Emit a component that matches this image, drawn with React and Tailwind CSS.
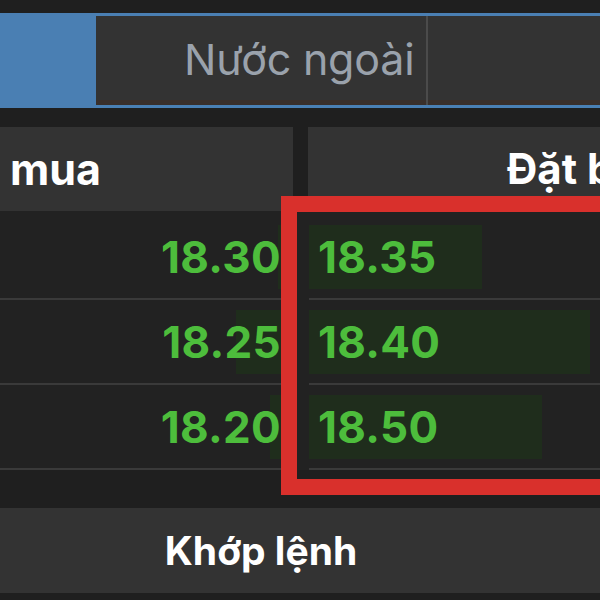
import React from "react";

const leftRows = [
  { price: "18.30", bar: 14, pt: "pt-[14px]" },
  { price: "18.25", bar: 56, pt: "pt-[10px]" },
  { price: "18.20", bar: 22, pt: "pt-[10px]" },
];
const rightRows = [
  { price: "18.35", bar: 173, pt: "pt-[14px]" },
  { price: "18.40", bar: 281, pt: "pt-[10px]" },
  { price: "18.50", bar: 233, pt: "pt-[10px]" },
];

export default function App() {
  return (
    <div
      className="relative w-[600px] h-[600px] overflow-hidden bg-[#1f1f1f]"
      style={{ fontFamily: "Inter, 'Noto Sans', 'Liberation Sans', sans-serif" }}
    >
      <div className="h-[13px]" />
      {/* Tabs */}
      <div className="flex h-[95px] border-y-[3px] border-[#4a7fb3] bg-[#4a7fb3]">
        <div className="w-[96px] shrink-0 bg-[#4a7fb3]" />
        <div className="w-[330px] shrink-0 flex items-center justify-start pl-[88px] bg-[#333333] border-b-[5px] border-[#392f2b] pt-[2px]">
          <span className="text-[43px] leading-none text-[#9aa2ac] tracking-[-0.2px] whitespace-nowrap">Nước ngoài</span>
        </div>
        <div className="w-[2px] shrink-0 bg-[#4b4b4b]" />
        <div className="flex-1 bg-[#333333] border-b-[5px] border-[#392f2b]" />
      </div>
      <div className="h-[19px]" />
      {/* Header */}
      <div className="flex h-[84px]">
        <div className="w-[293px] shrink-0 bg-[#333333] flex items-center pl-[10px]">
          <span className="text-[43px] font-bold text-white leading-none">mua</span>
        </div>
        <div className="w-[15px] shrink-0" />
        <div className="flex-1 min-w-0 overflow-hidden bg-[#333333] flex items-center pl-[199px]">
          <span className="text-[42px] font-bold text-white leading-none whitespace-nowrap">Đặt bán</span>
        </div>
      </div>
      {/* Rows */}
      <div className="flex bg-[#222222]">
        <div className="w-[292px] shrink-0 flex flex-col">
          {leftRows.map((r) => (
            <div key={r.price} className={`${r.pt} pb-[9px] border-b-2 border-[#3a3a3a]`}>
              <div className="relative h-[64px] flex items-center justify-end pr-[11px]">
                <div className="absolute right-0 top-0 h-full bg-[#1f2d1c]" style={{ width: r.bar }} />
                <span className="relative text-[44px] tracking-[0.3px] font-bold text-[#4dbd3c] leading-none">{r.price}</span>
              </div>
            </div>
          ))}
        </div>
        <div className="w-[17px] shrink-0" />
        <div className="flex-1 flex flex-col">
          {rightRows.map((r) => (
            <div key={r.price} className={`${r.pt} pb-[9px] border-b-2 border-[#3a3a3a]`}>
              <div className="relative h-[64px] flex items-center pl-[9px]">
                <div className="absolute left-0 top-0 h-full bg-[#1f2d1c]" style={{ width: r.bar }} />
                <span className="relative text-[44px] tracking-[0.3px] font-bold text-[#4dbd3c] leading-none">{r.price}</span>
              </div>
            </div>
          ))}
        </div>
      </div>
      <div className="h-[38px]" />
      {/* Button */}
      <div className="h-[85px] bg-[#333333] flex items-center justify-center pr-[78px]">
        <span className="text-[39px] font-bold text-white leading-none">Khớp lệnh</span>
      </div>
      {/* Red annotation box */}
      <div className="absolute left-[281px] top-[196px] w-[340px] h-[299px] border-[16px] border-[#d9302c]" />
    </div>
  );
}
